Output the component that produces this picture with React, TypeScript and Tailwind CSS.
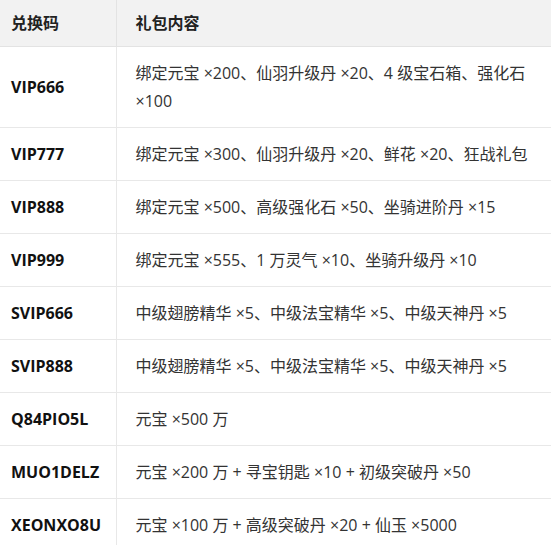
import React from "react";

const rows: [string, string][] = [
  ["VIP666", "绑定元宝 ×200、仙羽升级丹 ×20、4 级宝石箱、强化石 ×100"],
  ["VIP777", "绑定元宝 ×300、仙羽升级丹 ×20、鲜花 ×20、狂战礼包"],
  ["VIP888", "绑定元宝 ×500、高级强化石 ×50、坐骑进阶丹 ×15"],
  ["VIP999", "绑定元宝 ×555、1 万灵气 ×10、坐骑升级丹 ×10"],
  ["SVIP666", "中级翅膀精华 ×5、中级法宝精华 ×5、中级天神丹 ×5"],
  ["SVIP888", "中级翅膀精华 ×5、中级法宝精华 ×5、中级天神丹 ×5"],
  ["Q84PIO5L", "元宝 ×500 万"],
  ["MUO1DELZ", "元宝 ×200 万 + 寻宝钥匙 ×10 + 初级突破丹 ×50"],
  ["XEONXO8U", "元宝 ×100 万 + 高级突破丹 ×20 + 仙玉 ×5000"],
];

export default function App() {
  return (
    <div
      className="w-[551px] h-[545px] overflow-hidden bg-white text-[16px] leading-[28px] text-[#333]"
      style={{ fontFamily: '"Open Sans", "Noto Sans CJK SC", sans-serif' }}
    >
      <table className="w-[551px] border-collapse table-fixed">
        <colgroup>
          <col className="w-[116px]" />
          <col />
        </colgroup>
        <thead>
          <tr className="bg-[#f2f2f2]">
            <th className="text-left font-bold text-[#222] pl-[11px] pr-2 py-[9px] border-b border-r border-[#e3e3e3]">
              兑换码
            </th>
            <th className="text-left font-bold text-[#222] pl-[19px] pr-4 py-[9px] border-b border-[#e3e3e3]">
              礼包内容
            </th>
          </tr>
        </thead>
        <tbody>
          {rows.map(([code, gift]) => (
            <tr key={code}>
              <td className="pl-[11px] pr-1 py-[12px] font-bold text-[#111] border-b border-r border-[#e8e8e8] align-middle whitespace-nowrap">
                {code}
              </td>
              <td className="pl-[19px] pr-[16px] py-[12px] border-b border-[#e8e8e8] align-middle">
                {gift}
              </td>
            </tr>
          ))}
        </tbody>
      </table>
    </div>
  );
}
